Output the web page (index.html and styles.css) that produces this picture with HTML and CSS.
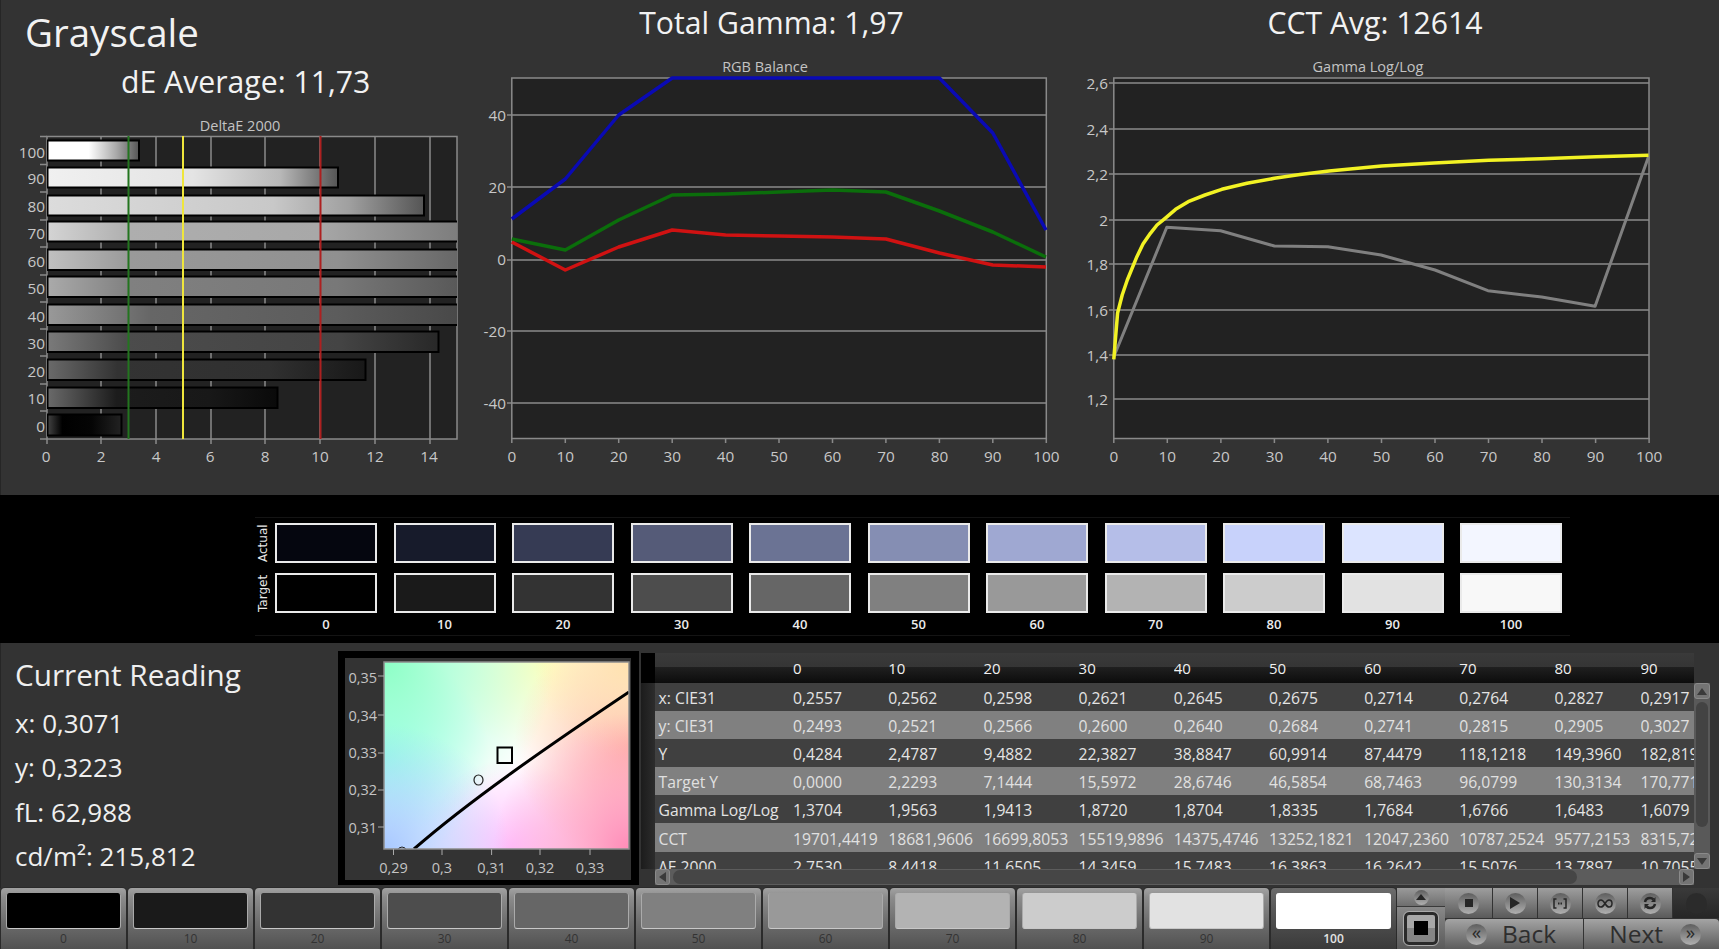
FILE: index.html
```html
<!DOCTYPE html>
<html lang="en">
<head>
<meta charset="utf-8">
<title>Grayscale</title>
<link rel="stylesheet" href="styles.css">
</head>
<body>
<div class="app">
  <section class="top">
    <div class="col col-delta">
      <h1 class="page-title">Grayscale</h1>
      <h2 class="stat stat-delta">dE Average: 11,73</h2>
      <svg class="chart" width="480" height="385" viewBox="0 110 480 385">
        <defs>
          <clipPath id="bars-clip"><rect x="47" y="136" width="410" height="303"/></clipPath>
          <linearGradient id="b100"><stop offset="0" stop-color="#fff"/><stop offset=".45" stop-color="#fff"/><stop offset=".75" stop-color="#aaa"/><stop offset="1" stop-color="#555"/></linearGradient>
          <linearGradient id="b90"><stop offset="0" stop-color="#f0f0f0"/><stop offset=".5" stop-color="#e4e4e4"/><stop offset=".8" stop-color="#b8b8b8"/><stop offset="1" stop-color="#555"/></linearGradient>
          <linearGradient id="b80"><stop offset="0" stop-color="#dcdcdc"/><stop offset=".6" stop-color="#c8c8c8"/><stop offset=".8" stop-color="#a0a0a0"/><stop offset="1" stop-color="#555"/></linearGradient>
          <linearGradient id="b70"><stop offset="0" stop-color="#d4d4d4"/><stop offset=".2" stop-color="#aeaeae"/><stop offset=".65" stop-color="#a8a8a8"/><stop offset="1" stop-color="#7c7c7c"/></linearGradient>
          <linearGradient id="b60"><stop offset="0" stop-color="#c0c0c0"/><stop offset=".2" stop-color="#999"/><stop offset=".7" stop-color="#909090"/><stop offset="1" stop-color="#666"/></linearGradient>
          <linearGradient id="b50"><stop offset="0" stop-color="#aaa"/><stop offset=".2" stop-color="#808080"/><stop offset=".7" stop-color="#787878"/><stop offset="1" stop-color="#585858"/></linearGradient>
          <linearGradient id="b40"><stop offset="0" stop-color="#999"/><stop offset=".25" stop-color="#666"/><stop offset=".7" stop-color="#5c5c5c"/><stop offset="1" stop-color="#484848"/></linearGradient>
          <linearGradient id="b30"><stop offset="0" stop-color="#7a7a7a"/><stop offset=".2" stop-color="#4c4c4c"/><stop offset=".75" stop-color="#444"/><stop offset="1" stop-color="#282828"/></linearGradient>
          <linearGradient id="b20"><stop offset="0" stop-color="#6a6a6a"/><stop offset=".22" stop-color="#333"/><stop offset=".7" stop-color="#303030"/><stop offset="1" stop-color="#181818"/></linearGradient>
          <linearGradient id="b10"><stop offset="0" stop-color="#6a6a6a"/><stop offset=".3" stop-color="#1c1c1c"/><stop offset=".7" stop-color="#181818"/><stop offset="1" stop-color="#0a0a0a"/></linearGradient>
          <linearGradient id="b0"><stop offset="0" stop-color="#444"/><stop offset=".2" stop-color="#000"/><stop offset=".6" stop-color="#050505"/><stop offset="1" stop-color="#222"/></linearGradient>
        </defs>
        <text class="chart-title" x="240" y="131">DeltaE 2000</text>
        <rect class="plot" x="47" y="136.5" width="410" height="302.5"/>
        <path class="grid" d="M101 136V439M156 136V439M211 136V439M265 136V439M320 136V439M375 136V439M430 136V439"/>
        <path class="tick" d="M40 136.5H47M40 164.5H47M40 192H47M40 220H47M40 247H47M40 275H47M40 302H47M40 329H47M40 356H47M40 384H47M40 411H47M40 439H47M47 439V444M101 439V444M156 439V444M211 439V444M265 439V444M320 439V444M375 439V444M430 439V444"/>
        <g clip-path="url(#bars-clip)">
          <rect class="bar" x="47.5" y="140.5" width="91.5" height="20" fill="url(#b100)"/>
          <rect class="bar" x="47.5" y="167.5" width="290.5" height="20" fill="url(#b90)"/>
          <rect class="bar" x="47.5" y="195.5" width="376.5" height="20" fill="url(#b80)"/>
          <rect class="bar" x="47.5" y="221.5" width="414" height="20" fill="url(#b70)"/>
          <rect class="bar" x="47.5" y="249.5" width="414" height="20.5" fill="url(#b60)"/>
          <rect class="bar" x="47.5" y="276.5" width="414" height="20.5" fill="url(#b50)"/>
          <rect class="bar" x="47.5" y="304.5" width="414" height="20.5" fill="url(#b40)"/>
          <rect class="bar" x="47.5" y="331.5" width="391" height="20.5" fill="url(#b30)"/>
          <rect class="bar" x="47.5" y="359.5" width="318" height="20.5" fill="url(#b20)"/>
          <rect class="bar" x="47.5" y="387.5" width="230" height="20.5" fill="url(#b10)"/>
          <rect class="bar" x="47.5" y="414.5" width="74" height="21" fill="url(#b0)"/>
        </g>
        <path class="limit limit-green" d="M128.5 136V439"/>
        <path class="limit limit-yellow" d="M183 136V439"/>
        <path class="limit limit-red" d="M320.5 136V439"/>
        <g class="axis-y">
          <text x="45" y="157.5">100</text><text x="45" y="183.5">90</text><text x="45" y="211.5">80</text><text x="45" y="238.5">70</text><text x="45" y="266.5">60</text><text x="45" y="293.5">50</text><text x="45" y="321.5">40</text><text x="45" y="348.5">30</text><text x="45" y="376.5">20</text><text x="45" y="403.5">10</text><text x="45" y="431.5">0</text>
        </g>
        <g class="axis-x">
          <text x="46" y="462">0</text><text x="101" y="462">2</text><text x="156" y="462">4</text><text x="210" y="462">6</text><text x="265" y="462">8</text><text x="320" y="462">10</text><text x="375" y="462">12</text><text x="429" y="462">14</text>
        </g>
      </svg>
    </div>

    <div class="col col-balance">
      <h2 class="stat stat-gamma">Total Gamma: 1,97</h2>
      <svg class="chart" width="580" height="445" viewBox="480 50 580 445">
        <text class="chart-title" x="765" y="71.500">RGB Balance</text>
        <rect class="plot" x="511.8" y="78" width="534.5" height="360.5"/>
        <path class="grid" d="M512 115H1046M512 187H1046M512 260H1046M512 331H1046M512 403H1046"/>
        <path class="tick" d="M507 115H512M507 187H512M507 260H512M507 331H512M507 403H512M511.8 438V443M565.3 438V443M618.7 438V443M672.2 438V443M725.6 438V443M779 438V443M832.5 438V443M885.9 438V443M939.4 438V443M992.8 438V443M1046.3 438V443"/>
        <polyline class="series series-blue" points="511.8,219 565.3,179 618.7,115 672.2,78 939.4,78 992.8,133 1046,230"/>
        <polyline class="series series-green" points="511.8,239 565.3,250 618.7,220 672.2,195 725.6,194 779,192 832.5,190 885.9,192 939.4,211 992.8,232 1046,257"/>
        <polyline class="series series-red" points="511.8,242 565.3,270 618.7,247 672.2,230 725.6,235 779,236 832.5,237 885.9,239 939.4,253 992.8,265 1046,267"/>
        <g class="axis-y">
          <text x="506" y="121">40</text><text x="506" y="193">20</text><text x="506" y="265">0</text><text x="506" y="337">-20</text><text x="506" y="409">-40</text>
        </g>
        <g class="axis-x">
          <text x="511.8" y="462">0</text><text x="565.3" y="462">10</text><text x="618.7" y="462">20</text><text x="672.2" y="462">30</text><text x="725.6" y="462">40</text><text x="779" y="462">50</text><text x="832.5" y="462">60</text><text x="885.9" y="462">70</text><text x="939.4" y="462">80</text><text x="992.8" y="462">90</text><text x="1046.3" y="462">100</text>
        </g>
      </svg>
    </div>

    <div class="col col-gamma">
      <h2 class="stat stat-cct">CCT Avg: 12614</h2>
      <svg class="chart" width="659" height="445" viewBox="1060 50 659 445">
        <text class="chart-title" x="1368" y="71.500">Gamma Log/Log</text>
        <rect class="plot" x="1113.8" y="78" width="535.2" height="360.5"/>
        <path class="grid" d="M1114 83H1649M1114 129H1649M1114 174H1649M1114 220H1649M1114 264H1649M1114 310H1649M1114 355H1649M1114 399H1649"/>
        <path class="tick" d="M1109 83H1114M1109 129H1114M1109 174H1114M1109 220H1114M1109 264H1114M1109 310H1114M1109 355H1114M1113.8 438V443M1167.3 438V443M1220.9 438V443M1274.4 438V443M1327.9 438V443M1381.5 438V443M1435 438V443M1488.5 438V443M1542 438V443M1595.6 438V443M1649.1 438V443"/>
        <polyline class="series series-gray" points="1113.8,356.7 1166.8,227.3 1220.6,230.7 1274.4,246 1327.8,246.7 1381.1,255 1435,270 1487.9,290.7 1541.7,297 1595.1,306.3 1648.5,156.7"/>
        <polyline class="series series-yellow" points="1113.8,359.3 1115.9,333.3 1117.6,313 1122.2,295 1127.3,280 1136.9,256.7 1143,244 1150.4,233.3 1157,225 1165.1,218.3 1175.6,209.3 1188.2,201.7 1205,195 1221.8,189.3 1247,183.3 1274.4,178.3 1300,174.5 1329,171 1381.6,166 1434,163 1488.8,160.3 1541.3,158.7 1596,156.7 1648.5,155.3"/>
        <g class="axis-y">
          <text x="1108" y="89">2,6</text><text x="1108" y="135">2,4</text><text x="1108" y="180">2,2</text><text x="1108" y="226">2</text><text x="1108" y="270">1,8</text><text x="1108" y="316">1,6</text><text x="1108" y="361">1,4</text><text x="1108" y="405">1,2</text>
        </g>
        <g class="axis-x">
          <text x="1113.8" y="462">0</text><text x="1167.3" y="462">10</text><text x="1220.9" y="462">20</text><text x="1274.4" y="462">30</text><text x="1327.9" y="462">40</text><text x="1381.5" y="462">50</text><text x="1435" y="462">60</text><text x="1488.5" y="462">70</text><text x="1542" y="462">80</text><text x="1595.6" y="462">90</text><text x="1649.1" y="462">100</text>
        </g>
      </svg>
    </div>
  </section>

  <section class="band">
    <div class="swatches">
      <div class="row-label">Actual</div>
      <div class="swatch a0"></div><div class="swatch a10"></div><div class="swatch a20"></div><div class="swatch a30"></div><div class="swatch a40"></div><div class="swatch a50"></div><div class="swatch a60"></div><div class="swatch a70"></div><div class="swatch a80"></div><div class="swatch a90"></div><div class="swatch a100"></div>
      <div class="row-label">Target</div>
      <div class="swatch t0"></div><div class="swatch t10"></div><div class="swatch t20"></div><div class="swatch t30"></div><div class="swatch t40"></div><div class="swatch t50"></div><div class="swatch t60"></div><div class="swatch t70"></div><div class="swatch t80"></div><div class="swatch t90"></div><div class="swatch t100"></div>
      <div></div>
      <div class="swatch-num">0</div><div class="swatch-num">10</div><div class="swatch-num">20</div><div class="swatch-num">30</div><div class="swatch-num">40</div><div class="swatch-num">50</div><div class="swatch-num">60</div><div class="swatch-num">70</div><div class="swatch-num">80</div><div class="swatch-num">90</div><div class="swatch-num">100</div>
    </div>
  </section>

  <section class="bottom">
    <div class="reading">
      <h2 class="reading-title">Current Reading</h2>
      <p class="reading-line">x: 0,3071</p>
      <p class="reading-line">y: 0,3223</p>
      <p class="reading-line">fL: 62,988</p>
      <p class="reading-line">cd/m²: 215,812</p>
    </div>

    <div class="gamut">
      <svg class="chart" width="286" height="222" viewBox="345 658 286 222">
        <defs>
          <radialGradient id="g-tl" gradientUnits="userSpaceOnUse" cx="384" cy="662" r="170"><stop offset="0" stop-color="#8cffc6"/><stop offset="1" stop-color="#8cffc6" stop-opacity="0"/></radialGradient>
          <radialGradient id="g-tm" gradientUnits="userSpaceOnUse" cx="545" cy="662" r="95"><stop offset="0" stop-color="#ffffbe"/><stop offset="1" stop-color="#ffffbe" stop-opacity="0"/></radialGradient>
          <radialGradient id="g-tr" gradientUnits="userSpaceOnUse" cx="629" cy="662" r="95"><stop offset="0" stop-color="#ffe2ae"/><stop offset="1" stop-color="#ffe2ae" stop-opacity="0"/></radialGradient>
          <radialGradient id="g-rm" gradientUnits="userSpaceOnUse" cx="629" cy="745" r="115"><stop offset="0" stop-color="#ffb8aa"/><stop offset="1" stop-color="#ffb8aa" stop-opacity="0"/></radialGradient>
          <radialGradient id="g-br" gradientUnits="userSpaceOnUse" cx="629" cy="849" r="135"><stop offset="0" stop-color="#ff8cb8"/><stop offset="1" stop-color="#ff8cb8" stop-opacity="0"/></radialGradient>
          <radialGradient id="g-bm" gradientUnits="userSpaceOnUse" cx="510" cy="849" r="90"><stop offset="0" stop-color="#ffc0ff"/><stop offset="1" stop-color="#ffc0ff" stop-opacity="0"/></radialGradient>
          <radialGradient id="g-bl" gradientUnits="userSpaceOnUse" cx="384" cy="849" r="125"><stop offset="0" stop-color="#a8c8ff"/><stop offset="1" stop-color="#a8c8ff" stop-opacity="0"/></radialGradient>
          <radialGradient id="g-lm" gradientUnits="userSpaceOnUse" cx="384" cy="755" r="105"><stop offset="0" stop-color="#a4ffff"/><stop offset="1" stop-color="#a4ffff" stop-opacity="0"/></radialGradient>
          <clipPath id="gamut-clip"><rect x="384" y="662" width="245" height="187"/></clipPath>
        </defs>
        <rect class="gamut-base" x="384" y="662" width="245" height="187"/>
        <rect x="384" y="662" width="245" height="187" fill="url(#g-bm)"/>
        <rect x="384" y="662" width="245" height="187" fill="url(#g-tm)"/>
        <rect x="384" y="662" width="245" height="187" fill="url(#g-lm)"/>
        <rect x="384" y="662" width="245" height="187" fill="url(#g-rm)"/>
        <rect x="384" y="662" width="245" height="187" fill="url(#g-tl)"/>
        <rect x="384" y="662" width="245" height="187" fill="url(#g-tr)"/>
        <rect x="384" y="662" width="245" height="187" fill="url(#g-br)"/>
        <rect x="384" y="662" width="245" height="187" fill="url(#g-bl)"/>
        <g clip-path="url(#gamut-clip)">
          <path class="locus" d="M414 849C470 800 550 745 629 692"/>
          <circle class="locus-point" cx="402" cy="851" r="4"/>
        </g>
        <rect class="gamut-frame" x="384" y="662" width="245" height="187"/>
        <rect class="target-mark" x="497.5" y="747.5" width="14.5" height="15.5"/>
        <ellipse class="reading-mark" cx="478.5" cy="780" rx="4.5" ry="5"/>
        <path class="gamut-tick" d="M378 676H384M378 715H384M378 753H384M378 790H384M378 827H384M393.5 849V855M442 849V855M491.6 849V855M540 849V855M590 849V855"/>
        <g class="gamut-y">
          <text x="377" y="683">0,35</text><text x="377" y="721">0,34</text><text x="377" y="758">0,33</text><text x="377" y="795">0,32</text><text x="377" y="833">0,31</text>
        </g>
        <g class="gamut-x">
          <text x="393.5" y="873">0,29</text><text x="442" y="873">0,3</text><text x="491.6" y="873">0,31</text><text x="540" y="873">0,32</text><text x="590" y="873">0,33</text>
        </g>
      </svg>
    </div>

    <div class="table-area">
      <div class="table-clip">
        <table class="data">
          <colgroup>
            <col class="c-gutter"><col class="c-label"><col class="c-val"><col class="c-val"><col class="c-val"><col class="c-val"><col class="c-val"><col class="c-val"><col class="c-val"><col class="c-val"><col class="c-short"><col class="c-last">
          </colgroup>
          <thead>
            <tr><th class="gutter"></th><th></th><th>0</th><th>10</th><th>20</th><th>30</th><th>40</th><th>50</th><th>60</th><th>70</th><th>80</th><th>90</th></tr>
          </thead>
          <tbody>
            <tr><td class="gutter"></td><td class="name">x: CIE31</td><td>0,2557</td><td>0,2562</td><td>0,2598</td><td>0,2621</td><td>0,2645</td><td>0,2675</td><td>0,2714</td><td>0,2764</td><td>0,2827</td><td>0,2917</td></tr>
            <tr><td class="gutter"></td><td class="name">y: CIE31</td><td>0,2493</td><td>0,2521</td><td>0,2566</td><td>0,2600</td><td>0,2640</td><td>0,2684</td><td>0,2741</td><td>0,2815</td><td>0,2905</td><td>0,3027</td></tr>
            <tr><td class="gutter"></td><td class="name">Y</td><td>0,4284</td><td>2,4787</td><td>9,4882</td><td>22,3827</td><td>38,8847</td><td>60,9914</td><td>87,4479</td><td>118,1218</td><td>149,3960</td><td>182,8195</td></tr>
            <tr><td class="gutter"></td><td class="name">Target Y</td><td>0,0000</td><td>2,2293</td><td>7,1444</td><td>15,5972</td><td>28,6746</td><td>46,5854</td><td>68,7463</td><td>96,0799</td><td>130,3134</td><td>170,7711</td></tr>
            <tr><td class="gutter"></td><td class="name">Gamma Log/Log</td><td>1,3704</td><td>1,9563</td><td>1,9413</td><td>1,8720</td><td>1,8704</td><td>1,8335</td><td>1,7684</td><td>1,6766</td><td>1,6483</td><td>1,6079</td></tr>
            <tr><td class="gutter"></td><td class="name">CCT</td><td>19701,4419</td><td>18681,9606</td><td>16699,8053</td><td>15519,9896</td><td>14375,4746</td><td>13252,1821</td><td>12047,2360</td><td>10787,2524</td><td>9577,2153</td><td>8315,7252</td></tr>
            <tr><td class="gutter"></td><td class="name">ΔE 2000</td><td>2,7530</td><td>8,4418</td><td>11,6505</td><td>14,3459</td><td>15,7483</td><td>16,3863</td><td>16,2642</td><td>15,5076</td><td>13,7897</td><td>10,7055</td></tr>
          </tbody>
        </table>
      </div>
      <div class="vscroll">
        <div class="scroll-btn"><svg width="10" height="7" viewBox="0 0 10 7"><path class="scroll-arrow" d="M5 0L10 7H0Z"/></svg></div>
        <div class="vthumb"></div>
        <div class="scroll-btn"><svg width="10" height="7" viewBox="0 0 10 7"><path class="scroll-arrow" d="M0 0H10L5 7Z"/></svg></div>
      </div>
      <div class="hscroll">
        <div class="scroll-btn"><svg width="7" height="10" viewBox="0 0 7 10"><path class="scroll-arrow" d="M7 0V10L0 5Z"/></svg></div>
        <div class="hthumb"></div>
        <div class="scroll-btn"><svg width="7" height="10" viewBox="0 0 7 10"><path class="scroll-arrow" d="M0 0V10L7 5Z"/></svg></div>
      </div>
    </div>
  </section>

  <footer class="toolbar">
    <div class="tiles">
      <div class="tile"><div class="tile-swatch t0"></div><span class="tile-num">0</span></div>
      <div class="tile"><div class="tile-swatch t10"></div><span class="tile-num">10</span></div>
      <div class="tile"><div class="tile-swatch t20"></div><span class="tile-num">20</span></div>
      <div class="tile"><div class="tile-swatch t30"></div><span class="tile-num">30</span></div>
      <div class="tile"><div class="tile-swatch t40"></div><span class="tile-num">40</span></div>
      <div class="tile"><div class="tile-swatch t50"></div><span class="tile-num">50</span></div>
      <div class="tile"><div class="tile-swatch t60"></div><span class="tile-num">60</span></div>
      <div class="tile"><div class="tile-swatch t70"></div><span class="tile-num">70</span></div>
      <div class="tile"><div class="tile-swatch t80"></div><span class="tile-num">80</span></div>
      <div class="tile"><div class="tile-swatch t90"></div><span class="tile-num">90</span></div>
      <div class="tile tile-active"><div class="tile-swatch t100"></div><span class="tile-num">100</span></div>
    </div>

    <div class="side-col">
      <div class="side-up"><div class="knob knob-small"><svg width="10" height="6" viewBox="0 0 10 6"><path class="icon-fill" d="M5 0L10 6H0Z"/></svg></div></div>
      <div class="side-stop"><div class="stop-frame"><div class="stop-square"></div></div></div>
    </div>

    <div class="transport">
      <div class="transport-row">
        <div class="t-btn"><div class="knob"><svg width="8" height="8" viewBox="0 0 8 8"><rect class="icon-fill" width="8" height="8"/></svg></div></div>
        <div class="t-btn"><div class="knob"><svg width="10" height="12" viewBox="0 0 10 12"><path class="icon-fill" d="M0 0L10 6L0 12Z"/></svg></div></div>
        <div class="t-btn"><div class="knob"><svg width="14" height="11" viewBox="0 0 14 11"><path class="icon-line" d="M3.5 1H1V10H3.5M10.5 1H13V10H10.5"/><path class="icon-fill" d="M5 4.5H6.5V6.5H5ZM7.5 4.5H9V6.5H7.5Z"/></svg></div></div>
        <div class="t-btn"><div class="knob"><svg width="16" height="9" viewBox="0 0 16 9"><path class="icon-line" d="M8 4.5C6.5 2 5.5 1 4 1C2.2 1 1 2.5 1 4.5S2.2 8 4 8C5.5 8 6.5 7 8 4.5C9.5 2 10.5 1 12 1C13.8 1 15 2.5 15 4.5S13.8 8 12 8C10.5 8 9.5 7 8 4.5Z"/></svg></div></div>
        <div class="t-btn"><div class="knob"><svg width="14" height="14" viewBox="0 0 14 14"><path class="icon-thick" d="M2 6C2.5 3.5 4.5 2 7 2C8.5 2 9.5 2.5 10.5 3.5"/><path class="icon-fill" d="M12.5 1V6H8Z"/><path class="icon-thick" d="M12 8C11.5 10.5 9.5 12 7 12C5.5 12 4.5 11.5 3.5 10.5"/><path class="icon-fill" d="M1.5 13V8H6Z"/></svg></div></div>
        <div class="t-end"><div class="t-end-dot"></div></div>
      </div>
      <div class="nav-row">
        <div class="nav-btn nav-back"><div class="knob"><span class="chev">«</span></div><span class="nav-text">Back</span></div>
        <div class="nav-btn nav-next"><span class="nav-text">Next</span><div class="knob"><span class="chev">»</span></div></div>
      </div>
    </div>
  </footer>
</div>
</body>
</html>
```
FILE: styles.css
```css
* { box-sizing: border-box; }
html, body { margin: 0; padding: 0; background: #333; }
body { font-family: "Open Sans", "Noto Sans", sans-serif; color: #eee; overflow: hidden; }
h1, h2, p { margin: 0; font-weight: 400; }

.app { width: 1719px; height: 949px; display: flex; flex-direction: column; overflow: hidden; }

/* top charts */
.top { height: 495px; display: flex; background: #333; box-shadow: inset 1px 0 #262626; }
.col-delta { width: 480px; padding-top: 8px; }
.col-balance { width: 580px; padding-top: 2.5px; }
.col-gamma { width: 659px; padding-top: 2.5px; }
.page-title { font-size: 38.5px; line-height: 48px; padding-left: 25px; color: #f2f2f2; }
.stat { font-size: 30.2px; line-height: 40px; color: #f2f2f2; white-space: nowrap; }
.stat-delta { margin-top: 5.5px; padding-left: 121px; }
.stat-gamma, .stat-cct { text-align: center; margin-bottom: 7.5px; }
.stat-gamma { padding-left: 3px; }
.stat-cct { padding-right: 29px; }
.col-delta .chart { margin-top: 8.5px; }
.chart { display: block; }
.chart text { font-family: "Open Sans", "Noto Sans", sans-serif; }
.chart-title { font-size: 14.5px; fill: #c4c4c4; text-anchor: middle; }
.plot { fill: #222; stroke: #8a8a8a; stroke-width: 1.5; }
.grid { stroke: #8a8a8a; stroke-width: 1.5; fill: none; }
.tick { stroke: #8a8a8a; stroke-width: 1.5; fill: none; }
.bar { stroke: #000; stroke-width: 2; }
.limit { stroke-width: 2; fill: none; }
.limit-green { stroke: #23751f; }
.limit-yellow { stroke: #efe63c; }
.limit-red { stroke: #ad2020; }
.axis-y text { font-size: 15.3px; fill: #c8c8c8; text-anchor: end; }
.axis-x text { font-size: 15.3px; fill: #c8c8c8; text-anchor: middle; }
.series { fill: none; stroke-width: 3.5; stroke-linejoin: round; }
.series-blue { stroke: #0a0ab4; }
.series-green { stroke: #0b6e0b; }
.series-red { stroke: #d01212; }
.series-gray { stroke: #808080; stroke-width: 3; }
.series-yellow { stroke: #f2f224; }

/* swatch band */
.band { height: 148px; background: #000; padding: 22px 0 0 255px; }
.swatches {
  width: 1315px; height: 119px; padding-top: 5px;
  display: grid; grid-template-columns: 3.5px repeat(11, 102px); column-gap: 16.5px;
  grid-template-rows: 40px 40px 24px; row-gap: 10px;
  border-top: 1px solid #141414; border-bottom: 1px solid #141414;
}
.row-label {
  writing-mode: vertical-rl; transform: rotate(180deg);
  font-family: "DejaVu Sans", sans-serif; font-size: 12px; line-height: 20px;
  text-align: center; color: #e8e8e8; width: 20px; margin-left: -2px;
}
.swatch { border: 2px solid #eaeaea; }
.swatch-num { font-size: 13px; font-weight: 600; line-height: 22px; text-align: center; color: #ececec; margin-top: -10px; height: 24px; }
.a0 { background: #05060f; } .a10 { background: #171b2b; } .a20 { background: #363b54; }
.a30 { background: #555b78; } .a40 { background: #6b7394; } .a50 { background: #858eb3; }
.a60 { background: #9fa8d2; } .a70 { background: #b5bee8; } .a80 { background: #c8d2fb; }
.a90 { background: #dce4ff; } .a100 { background: #f3f6ff; }
.t0 { background: #000; } .t10 { background: #1a1a1a; } .t20 { background: #333; }
.t30 { background: #4d4d4d; } .t40 { background: #666; } .t50 { background: #808080; }
.t60 { background: #999; } .t70 { background: #b3b3b3; } .t80 { background: #ccc; }
.t90 { background: #e2e2e2; } .t100 { background: #f8f8f8; }

/* bottom panel */
.bottom { height: 245px; display: flex; background: #333; box-shadow: inset 1px 0 #262626; }
.reading { width: 337.5px; padding: 10px 0 0 15px; }
.reading-title { font-size: 29.7px; line-height: 44px; margin-bottom: 3.5px; color: #efefef; }
.reading-line { font-size: 26px; line-height: 44.5px; color: #efefef; white-space: nowrap; }

.gamut { width: 301.5px; height: 234px; margin-top: 8px; background: #333; border-style: solid; border-color: #000; border-width: 7px 8px 5px 7.5px; }
.gamut-base { fill: #fff; }
.gamut-frame { fill: none; stroke: #8d8d8d; stroke-width: 1.5; }
.locus { fill: none; stroke: #000; stroke-width: 3; }
.locus-point { fill: none; stroke: #222; stroke-width: 1; }
.target-mark { fill: none; stroke: #000; stroke-width: 2; }
.reading-mark { fill: none; stroke: #222; stroke-width: 1.2; }
.gamut-tick { stroke: #aaa; stroke-width: 1; fill: none; }
.gamut-y text { font-size: 14.5px; fill: #c4c4c4; text-anchor: end; }
.gamut-x text { font-size: 14.5px; fill: #c4c4c4; text-anchor: middle; }

.table-area { margin: 10px 0 0 2px; display: grid; grid-template-columns: 1053px 16px; grid-template-rows: 216px 16px; width: 1069px; }
.table-clip { height: 216px; overflow: hidden; }
.data { border-collapse: collapse; table-layout: fixed; width: 1053px; font-size: 15.7px; }
.c-gutter { width: 14px; }
.c-label { width: 138px; }
.c-val { width: 95.2px; }
.c-short { width: 86px; }
.c-last { width: 53.4px; }
.data th, .data td { padding: 0; text-align: left; font-weight: 400; white-space: nowrap; overflow: hidden; }
.data td { padding-top: 2px; }
.data thead tr { height: 30px; background: linear-gradient(#3a3a3a 0, #353535 47%, #1f1f1f 48%, #0c0c0c 100%); }
.data th { color: #f0f0f0; font-size: 15px; }
.data tbody tr { height: 28px; background: #404040; color: #e4e4e4; }
.data tbody tr:nth-child(even) { background: #808080; color: #e0e0e0; }
.data tbody tr:nth-child(6) { height: 29px; }
.data th.gutter { background: #000; }
.data td.gutter { background: linear-gradient(90deg, #1c1c1c, #2c2c2c); }
.data td.name { padding-left: 3.6px; }

.scroll-btn { background: #747474; border-radius: 3px; display: flex; align-items: center; justify-content: center; border: 1px solid #8a8a8a; }
.scroll-arrow { fill: #3a3a3a; }
.vscroll { margin-top: 30px; height: 186px; background: #595959; display: flex; flex-direction: column; justify-content: space-between; }
.vscroll .scroll-btn { height: 16px; }
.vthumb { height: 125px; margin: 3px 2px auto; width: 12px; border-radius: 6px; background: #434343; }
.hscroll { padding-left: 14px; height: 16px; display: flex; align-items: stretch; gap: 3px; background: linear-gradient(90deg, #333 14px, #5c5c5c 14px); }
.hscroll .scroll-btn { width: 15px; }
.hthumb { width: 904px; height: 14px; border-radius: 7px; background: #464646; margin-right: auto; margin-top: 1px; }

/* toolbar */
.toolbar { height: 61px; display: flex; background: #333; }
.tiles { width: 1397px; flex: none; display: grid; grid-template-columns: repeat(11, 127px); }
.tile {
  border-radius: 4px 4px 0 0; margin: 0 1px;
  background: linear-gradient(#a2a2a2 0, #8c8c8c 15%, #6e6e6e 55%, #515151 100%);
  padding: 5px 4.7px 0; display: flex; flex-direction: column; align-items: center;
  box-shadow: 0 0 0 1px #2b2b2b;
}
.tile-swatch { width: 100%; height: 36px; border-radius: 3px; border-bottom: 1px solid #c8c8c8; border-left: 1px solid #aaa; border-right: 1px solid #aaa; }
.tile-num { font-size: 12px; line-height: 20px; color: #333; }
.tile-active { background: linear-gradient(#6c6c6c 0, #555 40%, #3a3a3a 100%); }
.tile-active .tile-num { color: #e4e4e4; font-weight: 600; }
.tile-active .tile-swatch { background: #fff; border-color: #fff; }

.knob {
  width: 21px; height: 21px; border-radius: 50%;
  background: linear-gradient(#5e5e5e, #b0b0b0);
  display: flex; align-items: center; justify-content: center; flex: none;
}
.knob-small { width: 15px; height: 15px; }
.icon-fill { fill: #262626; }
.icon-line { fill: none; stroke: #262626; stroke-width: 1.5; }
.icon-thick { fill: none; stroke: #262626; stroke-width: 2.5; }

.side-col { width: 48px; flex: none; display: flex; flex-direction: column; }
.side-up { height: 18px; background: linear-gradient(#9a9a9a, #6e6e6e); display: flex; align-items: center; justify-content: center; }
.side-stop { flex: 1; background: linear-gradient(#888, #5a5a5a); border-top: 1px solid #3a3a3a; display: flex; align-items: center; justify-content: center; }
.stop-frame {
  width: 34px; height: 33px; border: 3px solid #2a2a2a; border-radius: 5px; outline: 1px solid #aaa;
  background: linear-gradient(#a8a8a8 50%, #858585 50%);
  display: flex; align-items: center; justify-content: center;
}
.stop-square { width: 14px; height: 14px; background: #000; }

.transport { flex: 1; min-width: 0; display: flex; flex-direction: column; }
.transport-row { height: 30px; display: flex; margin-bottom: 1px; }
.t-btn { width: 45px; background: linear-gradient(#9e9e9e, #5a5a5a); border-right: 1px solid #333; display: flex; align-items: center; justify-content: center; }
.t-btn:first-child { width: 48px; }
.t-end { flex: 1; background: linear-gradient(#3a3a3a, #262626); display: flex; align-items: center; justify-content: center; }
.t-end-dot { width: 21px; height: 21px; border-radius: 50%; background: #2b2b2b; }
.nav-row { height: 30px; display: flex; }
.nav-btn { display: flex; align-items: center; background: linear-gradient(#a4a4a4, #5c5c5c); }
.nav-back { flex: none; width: 138px; padding-left: 21px; border-top-left-radius: 4px; }
.nav-next { flex: 1 1 0; min-width: 0; justify-content: flex-end; padding-right: 18px; border-left: 1px solid #333; border-top-right-radius: 4px; }
.nav-back .nav-text { margin-left: 15px; }
.nav-next .nav-text { margin-right: 17px; }
.nav-text { font-size: 24.5px; line-height: 30px; color: #2e2e2e; }
.chev { font-size: 19px; line-height: 19px; color: #2a2a2a; margin-top: -4px; }
```
